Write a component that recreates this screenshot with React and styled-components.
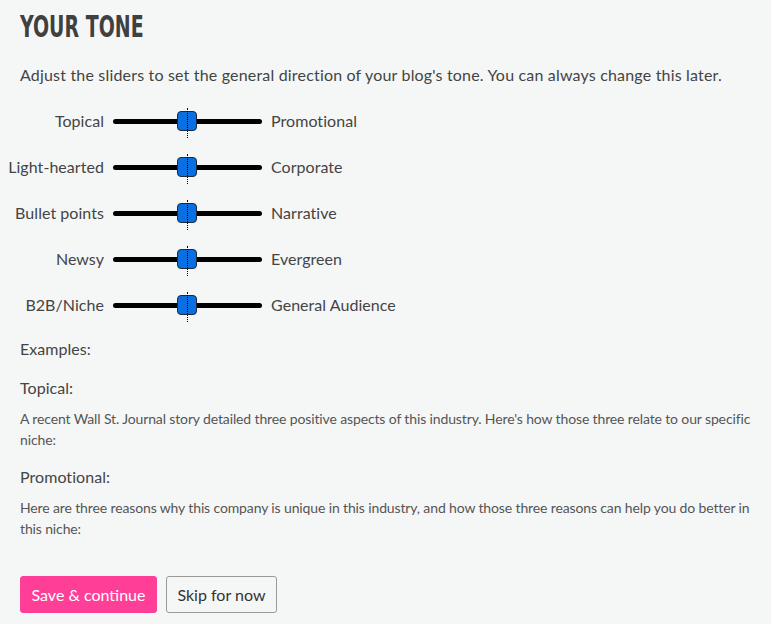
import React from "react";
import styled, { createGlobalStyle } from "styled-components";

const Global = createGlobalStyle`
  html, body { margin: 0; padding: 0; background: #f5f7f7; }
  body { font-family: Lato, "Noto Sans", sans-serif; color: #444; }
`;

const Page = styled.div`
  padding: 8px 20px 10px 20px;
`;

const Title = styled.h1`
  margin: 0;
  font-family: "DejaVu Sans Condensed", "Liberation Sans", sans-serif;
  font-weight: 700;
  font-size: 31px;
  line-height: 36px;
  color: #404040;
  display: inline-block;
  transform: scaleX(0.68);
  transform-origin: left center;
`;

const Intro = styled.p`
  margin: 21px 0 0 0;
  font-size: 16px;
  line-height: 20px;
  letter-spacing: 0.18px;
  color: #444;
`;

const Sliders = styled.div`
  margin: 26px 0 0 -20px;
  display: flex;
  flex-direction: column;
  gap: 26px;
`;

const Row = styled.div`
  display: grid;
  grid-template-columns: 104px 158px auto;
  align-items: center;
  height: 20px;
`;

const Label = styled.span`
  font-size: 16px;
  line-height: 20px;
  letter-spacing: 0.05px;
  color: #444;
  white-space: nowrap;
  text-align: ${(p) => (p.$right ? "left" : "right")};
  padding-left: ${(p) => (p.$right ? "9px" : "0")};
`;

const Track = styled.div`
  position: relative;
  margin-left: 9px;
  width: 149px;
  height: 5px;
  border-radius: 3px;
  background: #000;
`;

const Guide = styled.div`
  position: absolute;
  left: 74px;
  top: -11px;
  height: 30px;
  border-left: 1px dotted #000;
`;

const Thumb = styled.div`
  position: absolute;
  left: 64px;
  top: -8px;
  width: 18px;
  height: 18px;
  border: 1px solid #1d2a3a;
  border-radius: 4px;
  background: #0a6fe2;
`;

const Examples = styled.div`
  margin-top: 24px;
`;

const Heading = styled.div`
  font-size: 16px;
  line-height: 20px;
  letter-spacing: 0.05px;
  color: #444;
  margin-bottom: ${(p) => p.$gap || "19px"};
`;

const Small = styled.p`
  margin: 0 0 17px 0;
  font-size: 14px;
  line-height: 21px;
  color: #555;
  letter-spacing: -0.13px;
`;

const Buttons = styled.div`
  display: flex;
  gap: 9px;
  margin-top: 37px;
`;

const Button = styled.button`
  font-family: Lato, sans-serif;
  font-size: 16px;
  height: 37px;
  padding: 0 10.5px;
  border-radius: 3px;
  cursor: pointer;
  border: 1px solid ${(p) => (p.$primary ? "#ff3e98" : "#999")};
  background: ${(p) => (p.$primary ? "#ff3e98" : "transparent")};
  color: ${(p) => (p.$primary ? "#fff" : "#333")};
`;

const rows = [
  ["Topical", "Promotional"],
  ["Light-hearted", "Corporate"],
  ["Bullet points", "Narrative"],
  ["Newsy", "Evergreen"],
  ["B2B/Niche", "General Audience"],
];

export default function App() {
  return (
    <>
      <Global />
      <Page>
        <Title>YOUR TONE</Title>
        <Intro>
          Adjust the sliders to set the general direction of your blog's tone. You can always change this later.
        </Intro>
        <Sliders>
          {rows.map(([l, r]) => (
            <Row key={l}>
              <Label>{l}</Label>
              <Track>
                <Thumb />
                <Guide />
              </Track>
              <Label $right>{r}</Label>
            </Row>
          ))}
        </Sliders>
        <Examples>
          <Heading>Examples:</Heading>
          <Heading $gap="10px">Topical:</Heading>
          <Small>
            A recent Wall St. Journal story detailed three positive aspects of this industry. Here's how those three relate to our specific niche:
          </Small>
          <Heading $gap="10px">Promotional:</Heading>
          <Small>
            Here are three reasons why this company is unique in this industry, and how those three reasons can help you do better in this niche:
          </Small>
        </Examples>
        <Buttons>
          <Button $primary>Save &amp; continue</Button>
          <Button>Skip for now</Button>
        </Buttons>
      </Page>
    </>
  );
}
